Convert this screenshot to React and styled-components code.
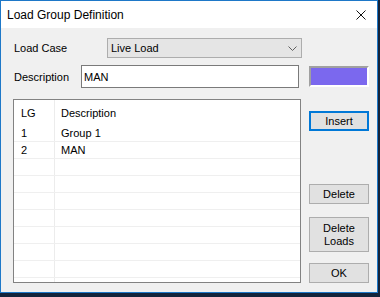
import styled, { createGlobalStyle } from "styled-components";

const GlobalStyle = createGlobalStyle`
  html, body {
    margin: 0;
    padding: 0;
    background: #13233b;
    width: 380px;
    height: 297px;
    overflow: hidden;
  }
  * {
    box-sizing: border-box;
  }
`;

//Styling
const Window = styled.div`
  width: 378px;
  height: 293px;
  border: 1px solid #1e78c8;
  background: #f0f0f0;
  display: flex;
  flex-direction: column;
  font-family: "Liberation Sans", Arial, sans-serif;
  font-size: 11px;
  color: #000;
`;

const TitleBar = styled.div`
  height: 27px;
  background: #fff;
  display: flex;
  align-items: center;
  justify-content: space-between;
  padding: 0 11px 0 6px;
  font-size: 12px;
`;

const CloseIcon = styled.svg`
  width: 10px;
  height: 10px;
  display: block;
`;

const Body = styled.div`
  flex: 1;
  display: flex;
  flex-direction: column;
  padding: 10px 8px 9px 12px;
`;

const FieldRow = styled.div`
  display: flex;
  align-items: center;
  height: ${(p) => p.$height}px;
  margin-top: ${(p) => p.$top || 0}px;
`;

const Label = styled.div`
  width: ${(p) => p.$width}px;
  padding-left: 1px;
`;

const Select = styled.div`
  width: 195px;
  height: 20px;
  background: #e5e5e5;
  border: 1px solid #adadad;
  display: flex;
  align-items: center;
  justify-content: space-between;
  padding: 0 4px 0 3px;
`;

const Input = styled.div`
  width: 218px;
  height: 23px;
  background: #fff;
  border: 1px solid #7a7a7a;
  display: flex;
  align-items: center;
  padding-left: 2px;
`;

const Swatch = styled.div`
  width: 60px;
  height: 21px;
  margin-left: 10px;
  background: ${(p) => p.$color};
  border-style: solid;
  border-width: 2px;
  border-color: #a0a0a0 #ffffff #ffffff #a0a0a0;
`;

const Main = styled.div`
  display: flex;
  gap: 8px;
  margin-top: 11px;
  height: 184px;
`;

const List = styled.div`
  width: 288px;
  height: 184px;
  border: 1px solid #828282;
  background: #fff;
  display: flex;
  flex-direction: column;
`;

const ListRow = styled.div`
  display: grid;
  grid-template-columns: 41px 1fr;
  height: ${(p) => (p.$header ? 25 : 17)}px;
  flex: ${(p) => (p.$fill ? 1 : "none")};
  border-bottom: ${(p) => (p.$line ? "1px solid #efefef" : "none")};
`;

const Cell = styled.div`
  display: flex;
  align-items: center;
  padding-left: ${(p) => (p.$first ? 7 : 6)}px;
  border-right: ${(p) => (p.$first ? "1px solid #ececec" : "none")};
`;

const ButtonColumn = styled.div`
  width: 60px;
  display: flex;
  flex-direction: column;
`;

const Button = styled.button`
  width: 60px;
  height: ${(p) => p.$height || 20}px;
  margin-top: ${(p) => (p.$top === "auto" ? "auto" : `${p.$top || 0}px`)};
  background: #e1e1e1;
  border: 1px solid ${(p) => (p.$focused ? "#0078d7" : "#adadad")};
  box-shadow: ${(p) => (p.$focused ? "inset 0 0 0 1px #0078d7" : "none")};
  font-family: "Liberation Sans", Arial, sans-serif;
  font-size: 11px;
  line-height: 13px;
  color: #000;
  padding: 0;
  text-align: center;
`;

const groups = [
  { lg: 1, description: "Group 1" },
  { lg: 2, description: "MAN" },
];

const TOTAL_ROWS = 9;

function App() {
  const rows = [...groups];
  while (rows.length < TOTAL_ROWS) rows.push({ lg: "", description: "" });

  return (
    <>
      <GlobalStyle />
      <Window>
        <TitleBar>
          <span>Load Group Definition</span>
          <CloseIcon viewBox="0 0 10 10">
            <path d="M0.5 0.5 L9.5 9.5 M9.5 0.5 L0.5 9.5" stroke="#111" strokeWidth="1" fill="none" />
          </CloseIcon>
        </TitleBar>
        <Body>
          <FieldRow $height={20}>
            <Label $width={94}>Load Case</Label>
            <Select>
              <span>Live Load</span>
              <svg width="9" height="5" viewBox="0 0 9 5">
                <path d="M0.5 0.5 L4.5 4.5 L8.5 0.5" stroke="#606060" strokeWidth="1" fill="none" />
              </svg>
            </Select>
          </FieldRow>
          <FieldRow $height={23} $top={7}>
            <Label $width={68}>Description</Label>
            <Input>MAN</Input>
            <Swatch $color="#7b68ee" />
          </FieldRow>
          <Main>
            <List>
              <ListRow $header>
                <Cell $first>LG</Cell>
                <Cell>Description</Cell>
              </ListRow>
              {rows.map((row, i) => (
                <ListRow key={i} $line>
                  <Cell $first>{row.lg}</Cell>
                  <Cell>{row.description}</Cell>
                </ListRow>
              ))}
              <ListRow $fill>
                <Cell $first />
                <Cell />
              </ListRow>
            </List>
            <ButtonColumn>
              <Button $top={12} $focused>Insert</Button>
              <Button $top="auto">Delete</Button>
              <Button $top={13} $height={35}>
                Delete
                <br />
                Loads
              </Button>
              <Button $top={11}>OK</Button>
            </ButtonColumn>
          </Main>
        </Body>
      </Window>
    </>
  );
}

export default App;
